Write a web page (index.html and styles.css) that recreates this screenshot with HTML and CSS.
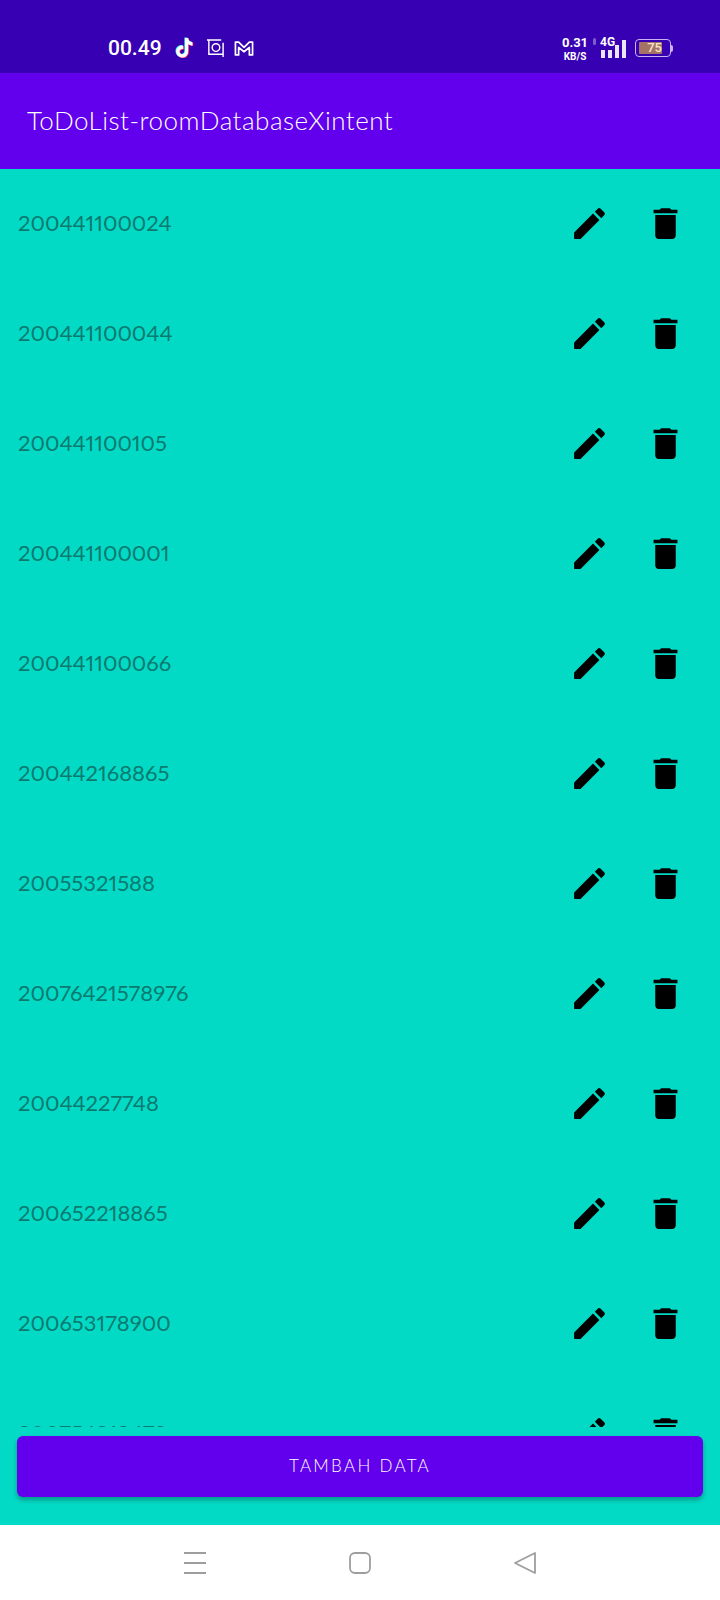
FILE: index.html
```html
<!DOCTYPE html>
<html lang="id">
<head>
  <meta charset="UTF-8">
  <title>ToDoList-roomDatabaseXintent</title>
  <link rel="stylesheet" href="styles.css">
</head>
<body>
  <div class="status-bar">
    <span class="clock">00.49</span>
    <svg class="st-icon tiktok" viewBox="1 0 19 22">
      <path transform="translate(-.7 -.5)" d="M11 1h3.2c.2 2.4 1.7 4 4.3 4.3v3.3c-1.6 0-3-.5-4.3-1.400v7.200c0 3.700-2.900 6.100-6 6.100-3.300 0-6-2.600-6-6 0-3.600 3.100-6.400 7-5.800v3.400c-2-.5-3.700.8-3.700 2.500 0 1.500 1.200 2.600 2.600 2.600 1.600 0 2.900-1.100 2.900-3z" fill="#25f4ee"/>
      <path transform="translate(.7 .5)" d="M11 1h3.2c.2 2.4 1.700 4 4.300 4.300v3.300c-1.600 0-3-.5-4.300-1.400v7.200c0 3.700-2.900 6.100-6 6.100-3.300 0-6-2.600-6-6 0-3.600 3.100-6.400 7-5.800v3.400c-2-.5-3.700.8-3.700 2.500 0 1.500 1.200 2.600 2.600 2.600 1.600 0 2.900-1.100 2.900-3z" fill="#fe2c55"/>
      <path d="M11 1h3.2c.2 2.4 1.7 4 4.3 4.3v3.3c-1.6 0-3-.5-4.3-1.400v7.200c0 3.700-2.900 6.100-6 6.100-3.300 0-6-2.600-6-6 0-3.600 3.100-6.400 7-5.800v3.400c-2-.5-3.700.8-3.700 2.500 0 1.500 1.200 2.600 2.600 2.600 1.600 0 2.900-1.100 2.900-3z" fill="#fff"/>
    </svg>
    <svg class="st-icon shot" viewBox="0 0 20 20" fill="none" stroke="#fff" stroke-width="1.500">
      <path d="M1 1h15M3 1v15h15V4M18 16v3"/>
      <circle cx="10.500" cy="9" r="4"/>
    </svg>
    <svg class="st-icon mail" viewBox="1 1 18 14" fill="none" stroke="#fff" stroke-width="1.600" stroke-linejoin="round">
      <path d="M2 2h3l5 5 5-5h3v12h-3V7l-5 4-5-4v7H2z"/>
    </svg>
    <div class="status-right">
      <div class="speed"><span class="speed-num">0.31</span><span class="speed-unit">KB/S</span></div>
      <div class="signal">
        <i class="net-dot"></i>
        <span class="net">4G</span>
        <div class="bars">
          <i class="bar b1"></i><i class="bar b2"></i><i class="bar b3"></i><i class="bar b4"></i>
        </div>
      </div>
      <div class="battery"><div class="battery-fill">75</div></div>
      <div class="battery-tip"></div>
    </div>
  </div>

  <header class="app-bar"><span class="app-title">ToDoList-roomDatabaseXintent</span></header>

  <main class="list">
    <div class="row">
      <span class="row-text">200441100024</span>
      <svg class="ic" viewBox="0 0 24 24"><path d="M3 17.250V21h3.750L17.810 9.940l-3.750-3.750L3 17.250zM20.710 7.040a1 1 0 000-1.410l-2.340-2.340a1 1 0 00-1.410 0l-1.830 1.830 3.750 3.750 1.830-1.830z"/></svg>
      <svg class="ic" viewBox="0 0 24 24"><path d="M6 19c0 1.100.9 2 2 2h8c1.100 0 2-.9 2-2V7H6v12zM19 4h-3.500l-1-1h-5l-1 1H5v2h14V4z"/></svg>
    </div>
    <div class="row">
      <span class="row-text">200441100044</span>
      <svg class="ic" viewBox="0 0 24 24"><path d="M3 17.250V21h3.750L17.810 9.940l-3.750-3.750L3 17.250zM20.710 7.040a1 1 0 000-1.410l-2.340-2.340a1 1 0 00-1.410 0l-1.830 1.830 3.750 3.750 1.830-1.830z"/></svg>
      <svg class="ic" viewBox="0 0 24 24"><path d="M6 19c0 1.100.9 2 2 2h8c1.100 0 2-.9 2-2V7H6v12zM19 4h-3.500l-1-1h-5l-1 1H5v2h14V4z"/></svg>
    </div>
    <div class="row">
      <span class="row-text">200441100105</span>
      <svg class="ic" viewBox="0 0 24 24"><path d="M3 17.250V21h3.750L17.810 9.940l-3.750-3.750L3 17.250zM20.710 7.040a1 1 0 000-1.410l-2.340-2.340a1 1 0 00-1.410 0l-1.830 1.830 3.750 3.750 1.830-1.830z"/></svg>
      <svg class="ic" viewBox="0 0 24 24"><path d="M6 19c0 1.100.9 2 2 2h8c1.100 0 2-.9 2-2V7H6v12zM19 4h-3.500l-1-1h-5l-1 1H5v2h14V4z"/></svg>
    </div>
    <div class="row">
      <span class="row-text">200441100001</span>
      <svg class="ic" viewBox="0 0 24 24"><path d="M3 17.250V21h3.750L17.810 9.940l-3.750-3.750L3 17.250zM20.710 7.040a1 1 0 000-1.410l-2.340-2.340a1 1 0 00-1.410 0l-1.830 1.830 3.750 3.750 1.830-1.830z"/></svg>
      <svg class="ic" viewBox="0 0 24 24"><path d="M6 19c0 1.100.9 2 2 2h8c1.100 0 2-.9 2-2V7H6v12zM19 4h-3.500l-1-1h-5l-1 1H5v2h14V4z"/></svg>
    </div>
    <div class="row">
      <span class="row-text">200441100066</span>
      <svg class="ic" viewBox="0 0 24 24"><path d="M3 17.250V21h3.750L17.810 9.940l-3.750-3.750L3 17.250zM20.710 7.040a1 1 0 000-1.410l-2.340-2.340a1 1 0 00-1.410 0l-1.830 1.830 3.750 3.750 1.830-1.830z"/></svg>
      <svg class="ic" viewBox="0 0 24 24"><path d="M6 19c0 1.100.9 2 2 2h8c1.100 0 2-.9 2-2V7H6v12zM19 4h-3.500l-1-1h-5l-1 1H5v2h14V4z"/></svg>
    </div>
    <div class="row">
      <span class="row-text">200442168865</span>
      <svg class="ic" viewBox="0 0 24 24"><path d="M3 17.250V21h3.750L17.810 9.940l-3.750-3.750L3 17.250zM20.710 7.040a1 1 0 000-1.410l-2.340-2.340a1 1 0 00-1.410 0l-1.830 1.830 3.750 3.750 1.830-1.830z"/></svg>
      <svg class="ic" viewBox="0 0 24 24"><path d="M6 19c0 1.100.9 2 2 2h8c1.100 0 2-.9 2-2V7H6v12zM19 4h-3.500l-1-1h-5l-1 1H5v2h14V4z"/></svg>
    </div>
    <div class="row">
      <span class="row-text">20055321588</span>
      <svg class="ic" viewBox="0 0 24 24"><path d="M3 17.250V21h3.750L17.810 9.940l-3.750-3.750L3 17.250zM20.710 7.040a1 1 0 000-1.410l-2.340-2.340a1 1 0 00-1.410 0l-1.830 1.830 3.750 3.750 1.830-1.830z"/></svg>
      <svg class="ic" viewBox="0 0 24 24"><path d="M6 19c0 1.100.9 2 2 2h8c1.100 0 2-.9 2-2V7H6v12zM19 4h-3.500l-1-1h-5l-1 1H5v2h14V4z"/></svg>
    </div>
    <div class="row">
      <span class="row-text">20076421578976</span>
      <svg class="ic" viewBox="0 0 24 24"><path d="M3 17.250V21h3.750L17.810 9.940l-3.750-3.750L3 17.250zM20.710 7.040a1 1 0 000-1.410l-2.340-2.340a1 1 0 00-1.410 0l-1.830 1.830 3.750 3.750 1.830-1.830z"/></svg>
      <svg class="ic" viewBox="0 0 24 24"><path d="M6 19c0 1.100.9 2 2 2h8c1.100 0 2-.9 2-2V7H6v12zM19 4h-3.500l-1-1h-5l-1 1H5v2h14V4z"/></svg>
    </div>
    <div class="row">
      <span class="row-text">20044227748</span>
      <svg class="ic" viewBox="0 0 24 24"><path d="M3 17.250V21h3.750L17.810 9.940l-3.750-3.750L3 17.250zM20.710 7.040a1 1 0 000-1.410l-2.340-2.340a1 1 0 00-1.410 0l-1.830 1.830 3.750 3.750 1.830-1.830z"/></svg>
      <svg class="ic" viewBox="0 0 24 24"><path d="M6 19c0 1.100.9 2 2 2h8c1.100 0 2-.9 2-2V7H6v12zM19 4h-3.500l-1-1h-5l-1 1H5v2h14V4z"/></svg>
    </div>
    <div class="row">
      <span class="row-text">200652218865</span>
      <svg class="ic" viewBox="0 0 24 24"><path d="M3 17.250V21h3.750L17.810 9.940l-3.750-3.750L3 17.250zM20.710 7.040a1 1 0 000-1.410l-2.340-2.340a1 1 0 00-1.410 0l-1.830 1.830 3.750 3.750 1.830-1.830z"/></svg>
      <svg class="ic" viewBox="0 0 24 24"><path d="M6 19c0 1.100.9 2 2 2h8c1.100 0 2-.9 2-2V7H6v12zM19 4h-3.500l-1-1h-5l-1 1H5v2h14V4z"/></svg>
    </div>
    <div class="row">
      <span class="row-text">200653178900</span>
      <svg class="ic" viewBox="0 0 24 24"><path d="M3 17.250V21h3.750L17.810 9.940l-3.750-3.750L3 17.250zM20.710 7.040a1 1 0 000-1.410l-2.340-2.340a1 1 0 00-1.410 0l-1.830 1.830 3.750 3.750 1.830-1.830z"/></svg>
      <svg class="ic" viewBox="0 0 24 24"><path d="M6 19c0 1.100.9 2 2 2h8c1.100 0 2-.9 2-2V7H6v12zM19 4h-3.500l-1-1h-5l-1 1H5v2h14V4z"/></svg>
    </div>
    <div class="row">
      <span class="row-text">200754218479</span>
      <svg class="ic" viewBox="0 0 24 24"><path d="M3 17.250V21h3.750L17.810 9.940l-3.750-3.750L3 17.250zM20.710 7.040a1 1 0 000-1.410l-2.340-2.340a1 1 0 00-1.410 0l-1.830 1.830 3.750 3.750 1.830-1.830z"/></svg>
      <svg class="ic" viewBox="0 0 24 24"><path d="M6 19c0 1.100.9 2 2 2h8c1.100 0 2-.9 2-2V7H6v12zM19 4h-3.500l-1-1h-5l-1 1H5v2h14V4z"/></svg>
    </div>
  </main>

  <div class="footer">
    <button class="add-btn">TAMBAH DATA</button>
  </div>

  <nav class="nav-bar">
    <svg class="nav-ic" viewBox="0 0 24 24" fill="none" stroke="#9e9e9e" stroke-width="2"><path d="M1 2h22M1 12h22M1 22h22"/></svg>
    <svg class="nav-ic" viewBox="0 0 24 24" fill="none" stroke="#9e9e9e" stroke-width="1.800"><rect x="2" y="2" width="20" height="20" rx="5"/></svg>
    <svg class="nav-ic" viewBox="0 0 24 24" fill="none" stroke="#9e9e9e" stroke-width="1.800" stroke-linejoin="round"><path d="M22 2v20L2 12z"/></svg>
  </nav>
</body>
</html>
```

FILE: styles.css
```css
* {
  box-sizing: border-box;
}
body {
  margin: 0;
  height: 1600px;
  display: flex;
  flex-direction: column;
  background-color: #03dac5;
  font-family: "Lato", "Liberation Sans", sans-serif;
  overflow: hidden;
}

/* status bar */
.status-bar {
  height: 73px;
  flex: none;
  display: flex;
  align-items: center;
  padding: 23px 0 0 108px;
  background-color: #3700b3;
  color: #ffffff;
}
.clock {
  font-family: "Roboto", sans-serif;
  font-size: 21px;
  font-weight: 500;
  width: 67px;
}
.st-icon {
  display: block;
  flex: none;
}
.tiktok {
  width: 19px;
  height: 22px;
  margin-right: 12px;
}
.shot {
  width: 19px;
  height: 19px;
  margin-right: 9px;
}
.mail {
  width: 20px;
  height: 15px;
}
.status-right {
  margin-left: auto;
  padding-right: 47px;
  display: flex;
  align-items: center;
}
.speed {
  width: 26px;
  display: flex;
  flex-direction: column;
  align-items: center;
  margin-top: 2px;
  margin-right: 12px;
  font-family: "Roboto", sans-serif;
  font-weight: 700;
}
.speed-num {
  font-size: 13px;
  line-height: 14px;
}
.speed-unit {
  font-size: 10px;
  line-height: 13px;
}
.signal {
  width: 26px;
  height: 20px;
  margin-right: 9px;
  display: flex;
  flex-direction: column;
  justify-content: flex-end;
  position: relative;
}
.net {
  position: absolute;
  left: 0;
  top: -2px;
  font-family: "Roboto", sans-serif;
  font-size: 12px;
  font-weight: 700;
  line-height: 12px;
}
.net-dot {
  position: absolute;
  left: -7px;
  top: 0;
  width: 3px;
  height: 7px;
  border-radius: 2px;
  background-color: #7a5fc9;
}
.bars {
  display: flex;
  align-items: flex-end;
  justify-content: flex-end;
  gap: 3px;
}
.bar {
  display: block;
  width: 4px;
  background-color: #ece4fb;
}
.b1 { height: 8px; }
.b2 { height: 8px; }
.b3 { height: 13px; }
.b4 { height: 18px; }
.battery {
  width: 36px;
  height: 18px;
  padding: 2px 3px;
  border: 1.500px solid #c9b3f2;
  border-radius: 4px;
}
.battery-fill {
  width: 23px;
  height: 100%;
  border-radius: 1px;
  background-color: #a57365;
  color: #f6e6c8;
  font-family: "Roboto", sans-serif;
  font-size: 13px;
  font-weight: 500;
  line-height: 12px;
  text-align: right;
}
.battery-tip {
  width: 2px;
  height: 7px;
  background-color: #c9b3f2;
  border-radius: 0 2px 2px 0;
}

/* app bar */
.app-bar {
  height: 96px;
  flex: none;
  display: flex;
  align-items: center;
  padding: 0 0 2px 27px;
  background-color: #6200ee;
  color: #ffffff;
}
.app-title {
  font-size: 26px;
  font-weight: 300;
  letter-spacing: 0.500px;
}

/* list */
.list {
  flex: 1;
  min-height: 0;
  overflow: hidden;
}
.row {
  height: 110px;
  display: flex;
  align-items: center;
  padding: 0 34px 2px 18px;
  gap: 35px;
}
.row-text {
  flex: 1;
  margin-bottom: 2px;
  font-size: 22px;
  font-variant-numeric: proportional-nums;
  color: #0b7a70;
}
.ic {
  width: 41px;
  height: 41px;
  flex: none;
  display: block;
  fill: #000000;
}

/* button + nav */
.footer {
  flex: none;
  padding: 9px 17px 28px;
}
.add-btn {
  display: block;
  width: 100%;
  height: 61px;
  border: none;
  border-radius: 6px;
  padding-bottom: 3px;
  background-color: #6200ee;
  color: #ffffff;
  font-family: "Lato", sans-serif;
  font-size: 17px;
  font-weight: 300;
  letter-spacing: 2.300px;
  box-shadow: 0 3px 5px rgba(0, 0, 0, 0.3);
}
.nav-bar {
  height: 75px;
  flex: none;
  display: flex;
  align-items: flex-start;
  justify-content: center;
  gap: 141px;
  padding-top: 26px;
  background-color: #ffffff;
}
.nav-ic {
  width: 24px;
  height: 24px;
  display: block;
}
```
